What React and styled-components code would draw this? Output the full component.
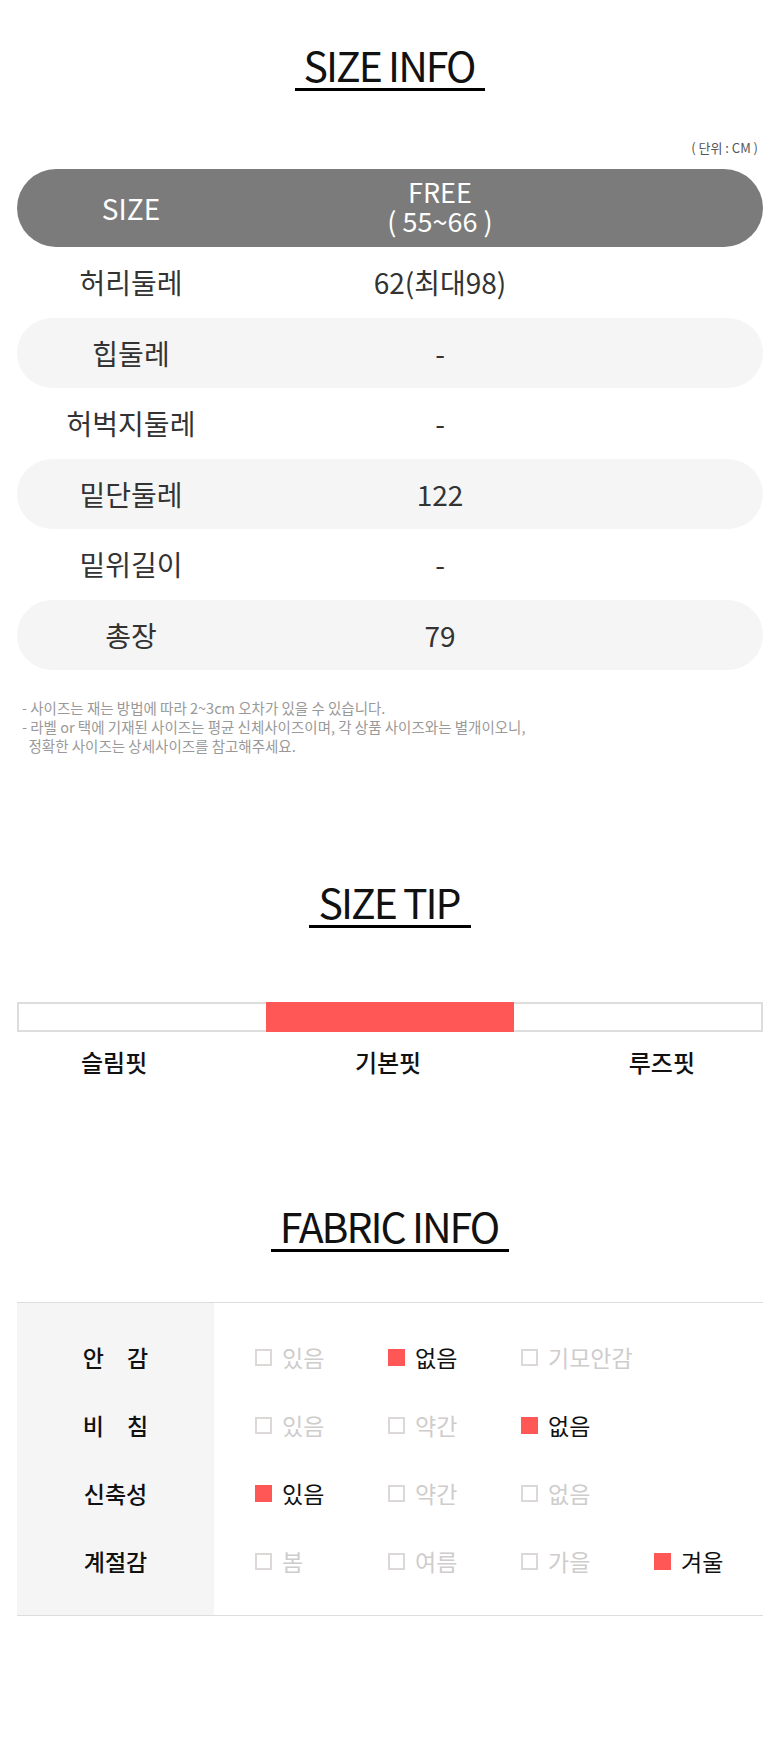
import React from 'react'
import styled, { createGlobalStyle } from 'styled-components'

const GlobalStyle = createGlobalStyle`
  html, body {
    margin: 0;
    padding: 0;
    background: #fff;
  }
  body {
    font-family: "Noto Sans CJK KR", "Noto Sans", sans-serif;
    color: #222;
  }
`

const sizeRows = [
  { label: '허리둘레', value: '62(최대98)' },
  { label: '힙둘레', value: '-' },
  { label: '허벅지둘레', value: '-' },
  { label: '밑단둘레', value: '122' },
  { label: '밑위길이', value: '-' },
  { label: '총장', value: '79' },
]

const fabricRows = [
  { label: '안　감', options: ['있음', '없음', '기모안감'], checked: 1 },
  { label: '비　침', options: ['있음', '약간', '없음'], checked: 2 },
  { label: '신축성', options: ['있음', '약간', '없음'], checked: 0 },
  { label: '계절감', options: ['봄', '여름', '가을', '겨울'], checked: 3 },
]

function App() {
  return (
    <Page>
      <GlobalStyle />

      <TitleWrap>
        <Title>SIZE INFO</Title>
      </TitleWrap>
      <Unit>( 단위 : CM )</Unit>

      <SizeTable>
        <HeadRow>
          <Cell>SIZE</Cell>
          <HeadValue>
            <span>FREE</span>
            <span>( 55~66 )</span>
          </HeadValue>
        </HeadRow>
        {sizeRows.map((row, i) => (
          <SizeRow key={row.label} $shade={i % 2 === 1}>
            <Cell>{row.label}</Cell>
            <Cell>{row.value}</Cell>
          </SizeRow>
        ))}
      </SizeTable>

      <Notes>
        <p>- 사이즈는 재는 방법에 따라 2~3cm 오차가 있을 수 있습니다.</p>
        <p>- 라벨 or 택에 기재된 사이즈는 평균 신체사이즈이며, 각 상품 사이즈와는 별개이오니,</p>
        <p>&nbsp;&nbsp;정확한 사이즈는 상세사이즈를 참고해주세요.</p>
      </Notes>

      <TitleWrap $top={126}>
        <Title>SIZE TIP</Title>
      </TitleWrap>

      <FitBar>
        <FitSegment />
        <FitSegment $active />
        <FitSegment />
      </FitBar>
      <FitLabels>
        <span>슬림핏</span>
        <span>기본핏</span>
        <span>루즈핏</span>
      </FitLabels>

      <TitleWrap $top={128}>
        <Title>FABRIC INFO</Title>
      </TitleWrap>

      <FabricTable>
        <FabricLabels>
          {fabricRows.map(row => (
            <FabricLabel key={row.label}>{row.label}</FabricLabel>
          ))}
        </FabricLabels>
        <FabricOptions>
          {fabricRows.map(row => (
            <OptionRow key={row.label}>
              {row.options.map((opt, i) => (
                <Option key={opt} $on={i === row.checked}>
                  <Check $on={i === row.checked} />
                  {opt}
                </Option>
              ))}
            </OptionRow>
          ))}
        </FabricOptions>
      </FabricTable>
    </Page>
  )
}

export default App

const Page = styled.div`
  width: 780px;
  box-sizing: border-box;
  padding: 44px 17px 140px;
`

const TitleWrap = styled.div`
  display: flex;
  justify-content: center;
  margin-top: ${p => (p.$top ? p.$top + 'px' : '0')};
`

const Title = styled.h2`
  margin: 0;
  font-size: 41px;
  font-weight: 400;
  line-height: 1;
  letter-spacing: -2px;
  color: #111;
  padding: 0 11px 3px 9px;
  border-bottom: 3px solid #000;
`

const Unit = styled.div`
  margin-top: 49px;
  text-align: right;
  padding-right: 5px;
  font-size: 13px;
  line-height: 16px;
  color: #555;
`

const SizeTable = styled.div`
  margin-top: 13px;
`

const HeadRow = styled.div`
  display: grid;
  grid-template-columns: 228px 390px 1fr;
  align-items: center;
  height: 78px;
  border-radius: 39px;
  background: #7b7b7b;
  color: #fff;
  font-size: 28px;
`

const HeadValue = styled.div`
  display: flex;
  flex-direction: column;
  align-items: center;
  font-size: 27px;
  line-height: 29px;
  margin-top: -4px;
`

const SizeRow = styled.div`
  display: grid;
  grid-template-columns: 228px 390px 1fr;
  align-items: center;
  height: 70.5px;
  border-radius: 36px;
  background: ${p => (p.$shade ? '#f5f5f5' : 'transparent')};
  color: #333;
  font-size: 28px;
`

const Cell = styled.div`
  text-align: center;
`

const Notes = styled.div`
  margin-top: 28px;
  padding-left: 5px;
  font-size: 14.5px;
  line-height: 19px;
  color: #999;

  p {
    margin: 0;
  }
`

const FitBar = styled.div`
  margin-top: 74px;
  display: grid;
  grid-template-columns: repeat(3, 1fr);
  height: 30px;
`

const FitSegment = styled.div`
  box-sizing: border-box;
  background: ${p => (p.$active ? '#ff5656' : '#fff')};
  border: 2px solid ${p => (p.$active ? '#ff5656' : '#dddddd')};
  border-left-width: 0;
  border-right-width: 0;

  &:first-child {
    border-left-width: 2px;
  }
  &:last-child {
    border-right-width: 2px;
  }
`

const FitLabels = styled.div`
  margin-top: 15px;
  display: flex;
  justify-content: space-between;
  padding: 0 68px 0 64px;
  font-size: 24px;
  line-height: 30px;
  font-weight: 500;
  color: #111;
`

const FabricTable = styled.div`
  margin-top: 50px;
  display: grid;
  grid-template-columns: 197px 1fr;
  border-top: 1px solid #dddddd;
  border-bottom: 1px solid #dddddd;
`

const FabricLabels = styled.div`
  background: #f5f5f5;
  padding: 20px 0;
`

const FabricLabel = styled.div`
  height: 68px;
  display: flex;
  align-items: center;
  justify-content: center;
  font-size: 23px;
  font-weight: 500;
  color: #111;
`

const FabricOptions = styled.div`
  padding: 20px 0 20px 41px;
`

const OptionRow = styled.div`
  height: 68px;
  display: grid;
  grid-template-columns: repeat(4, 133px);
  align-items: center;
`

const Option = styled.div`
  display: flex;
  align-items: center;
  gap: 10px;
  font-size: 23px;
  color: ${p => (p.$on ? '#111' : '#cfcccc')};
`

const Check = styled.span`
  box-sizing: border-box;
  width: 17px;
  height: 17px;
  flex: none;
  background: ${p => (p.$on ? '#ff5656' : 'transparent')};
  border: 2px solid ${p => (p.$on ? '#ff5656' : '#dcd8d8')};
`
